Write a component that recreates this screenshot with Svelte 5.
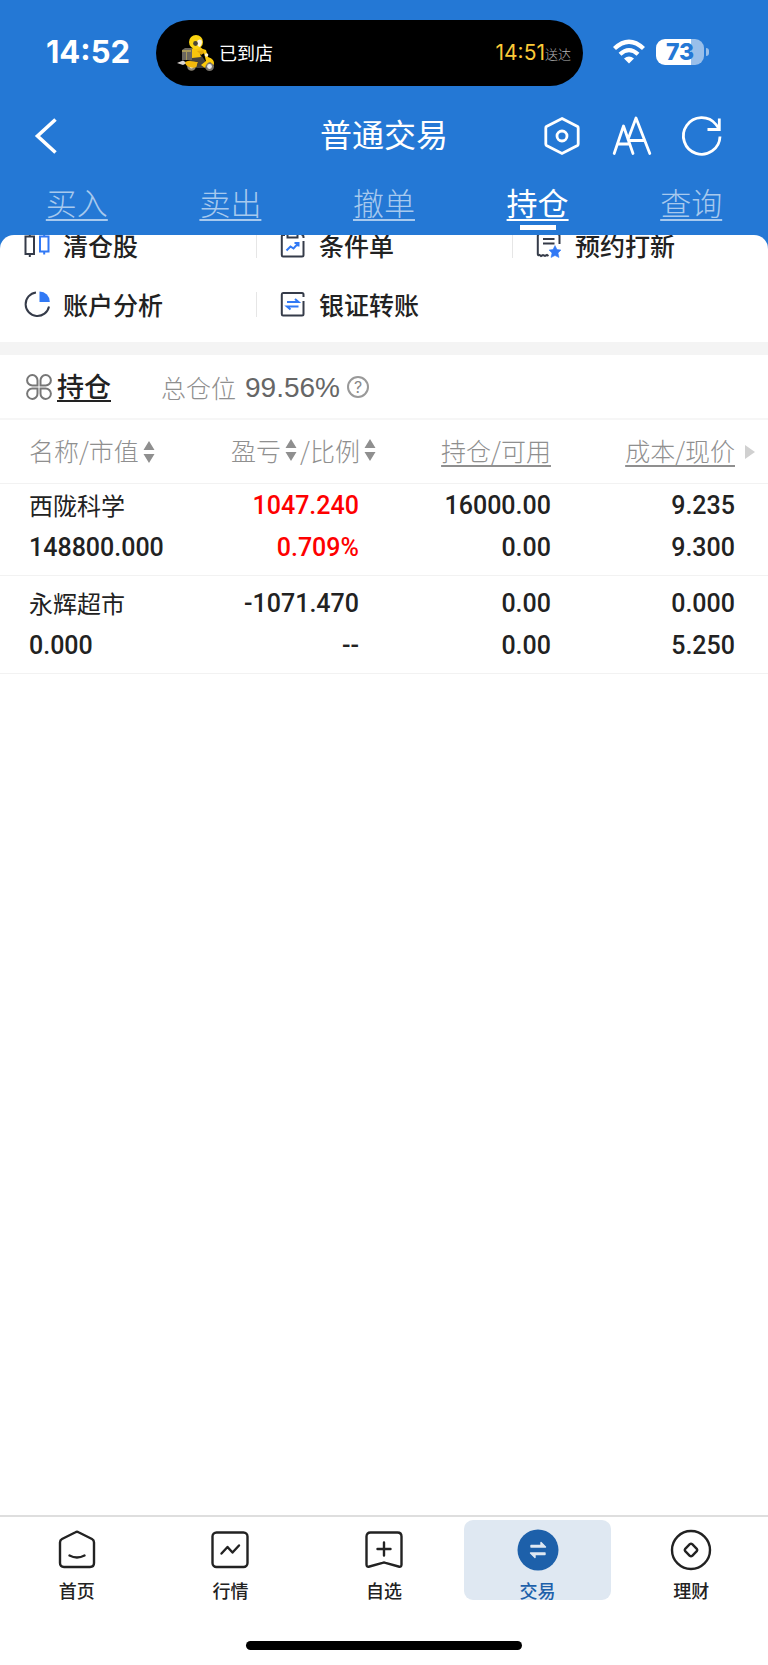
<script>
  let activeTab = "持仓";
  let activePage = "交易";

  const tabs = ["买入", "卖出", "撤单", "持仓", "查询"];

  const shortcuts = [
    { name: "清仓股", icon: "candles" },
    { name: "条件单", icon: "condition" },
    { name: "预约打新", icon: "booking" },
    { name: "账户分析", icon: "pie" },
    { name: "银证转账", icon: "transfer" }
  ];

  const holdings = [
    {
      name: "西陇科学",
      value: "148800.000",
      profit: "1047.240",
      ratio: "0.709%",
      amount: "16000.00",
      usable: "0.00",
      cost: "9.235",
      price: "9.300",
      up: true
    },
    {
      name: "永辉超市",
      value: "0.000",
      profit: "-1071.470",
      ratio: "--",
      amount: "0.00",
      usable: "0.00",
      cost: "0.000",
      price: "5.250",
      up: false
    }
  ];

  const pages = ["首页", "行情", "自选", "交易", "理财"];
</script>

{#snippet sorter()}
  <svg class="sorter" viewBox="0 0 12 24" aria-hidden="true">
    <path d="M6 1 L11.500 10 H0.500 Z M6 23 L0.500 14 H11.500 Z" fill="#8f8f8f" />
  </svg>
{/snippet}

<div class="app">
  <header>
    <div class="status">
      <span class="clock">14:52</span>
      <div class="island">
        <svg class="scooter" viewBox="0 0 38 36" aria-hidden="true">
          <path d="M0 28 L6 25.500 L10 28 L6 30 Z" fill="#d9d4d0" />
          <circle cx="14.500" cy="31.500" r="4.300" fill="#8a8474" />
          <circle cx="14.500" cy="31.500" r="2" fill="#f0ecd8" />
          <circle cx="32.500" cy="31.500" r="4.500" fill="#77736c" />
          <circle cx="32.500" cy="31.500" r="2.400" fill="#e9e9ec" />
          <path d="M8 27 Q13 24 21 27 L20 32 Q13 34 9 30 Z" fill="#f3b90c" />
          <path d="M14 22 L24 20 L29 27 L27 33 H19 L21 27 L13 26 Z" fill="#45413c" />
          <path d="M5 15 L8 13 H15 V25 H5 Z" fill="#6b675f" />
          <path d="M5 15 H14 V17 H5 Z M9 17 H10 V25 H9 Z" fill="#a99a5b" />
          <path d="M15 14 L17 11 H22 L27 15 V18 L23 19 L24 22 L15 23 Z" fill="#f8c50d" />
          <path d="M20 16 L28 15 L29 17 L24 20 Z" fill="#e4a80a" />
          <path d="M26 14 L29 15 L31 22 Q38 24 37 30 L33 27 Q29 28 28 33 L24 30 L29 26 Z" fill="#fbc90a" />
          <circle cx="29.500" cy="20" r="1.800" fill="#fff3cf" />
          <circle cx="19" cy="7" r="7" fill="#fbd410" />
          <path d="M20 6 Q22 3.500 24.500 5 Q26 9 22.500 12 Q20 11 20 9 Z" fill="#fff5db" />
          <circle cx="18.500" cy="8.500" r="2.400" fill="#4a4538" />
        </svg>
        <span class="arrived">已到店</span>
        <span class="eta">14:51</span>
        <span class="eta-note">送达</span>
      </div>
      <div class="signals">
        <svg class="wifi" viewBox="0 0 32 24" aria-hidden="true">
          <path d="M1.500 8.500 Q16 -5 30.500 8.500" fill="none" stroke="#fff" stroke-width="4.400" />
          <path d="M7 14.200 Q16 6 25 14.200" fill="none" stroke="#fff" stroke-width="4.200" />
          <path d="M11 18.500 Q16 14.500 21 18.500 L16 23.500 Z" fill="#fff" />
        </svg>
        <div class="battery"><span>73</span></div>
        <i class="nub"></i>
      </div>
    </div>

    <div class="titlebar">
      <button class="back" aria-label="返回">
        <svg viewBox="0 0 22 36" aria-hidden="true">
          <path d="M20.500 1.500 L2.500 18 L20.500 34.500" fill="none" stroke="#fff" stroke-width="3.600" />
        </svg>
      </button>
      <h1>普通交易</h1>
      <div class="tools">
        <button aria-label="设置">
          <svg viewBox="0 0 40 40" fill="none" stroke="#fff" stroke-width="2.800" aria-hidden="true">
            <path d="M20 2.500 L35.500 10.500 Q36.200 11 36.200 12 V28 Q36.200 29 35.500 29.500 L20 37.500 L4.500 29.500 Q3.800 29 3.800 28 V12 Q3.800 11 4.500 10.500 Z" />
            <circle cx="20" cy="20" r="5" />
          </svg>
        </button>
        <button aria-label="字体大小">
          <svg viewBox="0 0 40 40" fill="none" stroke="#fff" stroke-width="2.800" stroke-linecap="round" stroke-linejoin="round" aria-hidden="true">
            <path d="M2.200 37.500 L11.500 10 L21 37.500 M6 28 H17.500 M16 23.500 L24 2 L37.800 37.500 M17 24.500 H32.500" />
          </svg>
        </button>
        <button aria-label="刷新">
          <svg viewBox="0 0 40 40" fill="none" stroke="#fff" stroke-width="2.800" aria-hidden="true">
            <path d="M38 20.500 A18.300 18.300 0 1 1 34 8.500 L36.500 12" />
            <path d="M37.300 2.500 V13.500 H25.500" />
          </svg>
        </button>
      </div>
    </div>

    <nav class="tabs">
      {#each tabs as tab}
        <a
          href="#{tab}"
          class:active={tab === activeTab}
          on:click|preventDefault={() => (activeTab = tab)}
        >{tab}</a>
      {/each}
    </nav>
  </header>

  <main>
    <section class="shortcuts">
      <div class="shortcut-grid">
        {#each shortcuts as item, i}
          <button class="shortcut" class:first={i % 3 === 0}>
            <svg viewBox="0 0 26 26" fill="none" stroke="#353b49" stroke-width="2" aria-hidden="true">
              {#if item.icon === "candles"}
                <path d="M1.500 4.500 H10 V22 H1.500 Z M5.800 1 V4.500 M5.800 22 V25" />
                <path d="M16 4.500 H24.500 V19.500 H16 Z M20.200 1 V4.500 M20.200 19.500 V22.500" stroke="#3179f5" />
              {:else if item.icon === "condition"}
                <path d="M5 3 H3 Q1.800 3 1.800 4.500 V23 Q1.800 24.500 3 24.500 H22 Q23.500 24.500 23.500 23 V9 M23.500 6 V5 Q23.500 3 21.500 3" />
                <path d="M7.500 1.500 V5.500 H17.500 V1.500 H14.500 Q12.500 -1 10.500 1.500 Z" />
                <path d="M6.500 18.500 L10.500 14.500 L13.500 16.500 L18.500 11 M14.500 11 H18.500 V14.500" stroke="#3179f5" />
              {:else if item.icon === "booking"}
                <path d="M23.500 12 V4 Q23.500 2 21.500 2 H3.500 Q1.800 2 1.800 4 V22 Q1.800 24 3.500 23 L5 24 L7 23 L9 24 L11 23 L12.500 24 M7 7 H18.500 M7 11.500 H18.500" />
                <path d="M19 13.500 L21 17.500 L25 18 L22 21 L23 25.500 L19 23.500 L15 25.500 L16 21 L13 18 L17 17.500 Z" fill="#3179f5" stroke="#3179f5" stroke-width="0.500" />
              {:else if item.icon === "pie"}
                <path d="M12 1.500 A11.800 11.800 0 1 0 25 15.500" />
                <path d="M15.500 0.500 A10.300 10.300 0 0 1 25.800 11 H15.500 Z" fill="#3179f5" stroke="none" />
              {:else}
                <path d="M23.500 6 V3.500 Q23.500 2 22 2 H3 Q1.800 2 1.800 3.500 V23 Q1.800 24.500 3 24.500 H22 Q23.500 24.500 23.500 23 V10" />
                <path d="M7 11 H18.500 L15 8 M18.500 15.500 H7 L10.500 18.500" stroke="#3179f5" />
              {/if}
            </svg>
            {item.name}
          </button>
        {/each}
      </div>
    </section>

    <section class="summary">
      <svg class="clover" viewBox="0 0 26 26" fill="none" stroke="#777" stroke-width="2" aria-hidden="true">
        <path d="M11.500 11.500 H6.500 A5.200 5.200 0 1 1 11.500 6.500 Z M14.500 11.500 V6.500 A5.200 5.200 0 1 1 19.500 11.500 Z M11.500 14.500 V19.500 A5.200 5.200 0 1 1 6.500 14.500 Z M14.500 14.500 H19.500 A5.200 5.200 0 1 1 14.500 19.500 Z" />
      </svg>
      <h2>持仓</h2>
      <span class="total">总仓位</span>
      <span class="percent">99.56%</span>
      <button class="help" aria-label="仓位说明">?</button>
    </section>

    <table>
      <thead>
        <tr>
          <th>名称/市值{@render sorter()}</th>
          <th><div class="hang">盈亏{@render sorter()}<span class="slash">/</span>比例{@render sorter()}</div></th>
          <th><u>持仓/可用</u></th>
          <th class="last">
            <u>成本/现价</u>
            <svg class="more" viewBox="0 0 10 14" aria-hidden="true"><path d="M0 0 L10 7 L0 14 Z" fill="#d0d0d0" /></svg>
          </th>
        </tr>
      </thead>
      <tbody>
        {#each holdings as row}
          <tr>
            <td><div class="stock">{row.name}</div><div>{row.value}</div></td>
            <td class:up={row.up}><div>{row.profit}</div><div>{row.ratio}</div></td>
            <td><div>{row.amount}</div><div>{row.usable}</div></td>
            <td><div>{row.cost}</div><div>{row.price}</div></td>
          </tr>
        {/each}
      </tbody>
    </table>
  </main>

  <footer>
    <nav class="pages">
      {#each pages as page, i}
        <a
          href="#{page}"
          class:active={page === activePage}
          on:click|preventDefault={() => (activePage = page)}
        >
          <svg viewBox="0 0 42 42" fill="none" stroke="#222" stroke-width="2.400" stroke-linecap="round" stroke-linejoin="round" aria-hidden="true">
            {#if i === 0}
              <path d="M19.500 3.200 Q21 2.400 22.500 3.200 L36 10 Q38 11 38 13.500 V34 Q38 38 34 38 H8 Q4 38 4 34 V13.500 Q4 11 6 10 Z" />
              <path d="M13.500 26.500 Q21 30.500 28.500 26.500" />
            {:else if i === 1}
              <rect x="3.500" y="3.500" width="35" height="34.500" rx="4" />
              <path d="M12.500 24.500 L18.500 18 L23.500 23.500 L30 16.500" />
            {:else if i === 2}
              <path d="M7.500 3.500 H34.500 Q38.500 3.500 38.500 7.500 V35.500 Q38.500 38.500 35.500 37.500 L22.500 33.800 Q21 33.300 19.500 33.800 L6.500 37.500 Q3.500 38.500 3.500 35.500 V7.500 Q3.500 3.500 7.500 3.500 Z" />
              <path d="M21 13.500 V26.500 M14.500 20 H27.500" />
            {:else if i === 3}
              <circle cx="21" cy="21" r="20.500" fill="#1d60aa" stroke="none" />
              <path d="M14 16.500 H24 V13.500 L28.500 18 H14 Z M28 25.500 H18 V28.500 L13.500 24 H28 Z" fill="#dfe8f2" stroke="#dfe8f2" stroke-width="1.400" />
            {:else}
              <circle cx="21" cy="21" r="19" />
              <path d="M19.800 15.200 Q21 14.200 22.200 15.200 L26.800 19.800 Q27.800 21 26.800 22.200 L22.200 26.800 Q21 27.800 19.800 26.800 L15.200 22.200 Q14.200 21 15.200 19.800 Z" />
            {/if}
          </svg>
          {page}
        </a>
      {/each}
    </nav>
    <div class="home-bar"></div>
  </footer>
</div>

<style>
  :global(body) {
    background: #fff;
  }

  .app {
    min-height: 100vh;
    display: flex;
    flex-direction: column;
    background: #2478d5;
    color: #222;
    font-family: "Noto Sans CJK SC", sans-serif;
  }
  button {
    padding: 0;
    border: none;
    background: none;
    color: inherit;
    font-family: inherit;
    cursor: pointer;
  }
  a {
    color: inherit;
    text-decoration: none;
  }
  svg {
    display: block;
    flex: none;
    overflow: visible;
  }

  /* Status bar */
  .status {
    display: grid;
    grid-template-columns: 156px 1fr 185px;
    align-items: center;
    padding-top: 20px;
    color: #fff;
  }
  .clock {
    padding: 0 0 2px 46px;
    font: 700 31px/36px Inter, sans-serif;
  }
  .island {
    display: flex;
    align-items: center;
    height: 66px;
    padding: 0 12px 0 21px;
    border-radius: 33px;
    background: #000;
  }
  .scooter {
    width: 38px;
    height: 36px;
    margin-right: 4px;
  }
  .arrived {
    padding-bottom: 2px;
    font-size: 18px;
    font-weight: 400;
  }
  .eta {
    margin-left: auto;
    color: #fbca38;
    font: 400 21px/24px Inter, sans-serif;
  }
  .eta-note {
    color: #b5b5b5;
    font-size: 13px;
    font-weight: 300;
  }
  .signals {
    display: flex;
    align-items: center;
    padding: 0 0 2px 30px;
  }
  .wifi {
    width: 32px;
    height: 24px;
    margin-right: 11px;
  }
  .battery {
    width: 48px;
    height: 26px;
    border-radius: 9px;
    background: linear-gradient(90deg, #fff 73%, #99bfea 73%);
    color: #2478d5;
    font: 800 23px/26px Inter, sans-serif;
    text-align: center;
  }
  .nub {
    width: 3px;
    height: 8px;
    margin-left: 2px;
    border-radius: 0 4px 4px 0;
    background: #99bfea;
  }

  /* Title bar */
  .titlebar {
    display: grid;
    grid-template-columns: 1fr auto 1fr;
    align-items: center;
    height: 99px;
    padding: 0 46px 0 35px;
    color: #fff;
  }
  h1 {
    margin: 0 0 0 11px;
    padding-bottom: 6px;
    font-size: 32px;
    font-weight: 400;
    line-height: 46px;
  }
  .back svg {
    width: 22px;
    height: 36px;
  }
  .tools {
    display: flex;
    justify-content: flex-end;
    gap: 30px;
  }
  .tools svg {
    width: 40px;
    height: 40px;
  }

  /* Tabs */
  .tabs {
    display: grid;
    grid-template-columns: repeat(5, 1fr);
    height: 50px;
    justify-items: center;
  }
  .tabs a {
    position: relative;
    color: #a7c9ee;
    font-size: 31px;
    font-weight: 300;
    line-height: 34px;
    text-decoration: underline;
    text-decoration-thickness: 2px;
    text-underline-offset: 4px;
  }
  .tabs .active {
    color: #fff;
    font-weight: 400;
  }
  .tabs .active::after {
    content: "";
    position: absolute;
    left: 50%;
    bottom: 5px;
    width: 36px;
    height: 5px;
    margin-left: -18px;
    background: #fff;
  }

  main {
    flex: 1;
    overflow: hidden;
    border-radius: 14px 14px 0 0;
    background: #fff;
  }

  /* Shortcuts */
  .shortcuts {
    overflow: hidden;
    padding-bottom: 7px;
    border-bottom: 13px solid #f4f4f4;
  }
  .shortcut-grid {
    display: grid;
    grid-template-columns: repeat(3, 1fr);
    grid-auto-rows: 59px;
    margin-top: -18px;
  }
  .shortcut {
    display: flex;
    align-items: center;
    gap: 13px;
    padding-bottom: 3px;
    font-size: 25px;
    font-weight: 500;
    line-height: 24px;
  }
  .shortcut::before {
    content: "";
    width: 1px;
    height: 25px;
    margin-right: 11px;
    background: #e6e6e6;
  }
  .shortcut.first::before {
    background: none;
  }
  .shortcut svg {
    width: 26px;
    height: 26px;
    margin-left: -1px;
  }

  /* Summary */
  .summary {
    display: flex;
    align-items: center;
    height: 63px;
    padding-left: 26px;
    border-bottom: 2px solid #f6f6f6;
  }
  .clover {
    width: 26px;
    height: 26px;
    margin-right: 5px;
  }
  h2 {
    margin: 0 50px 0 0;
    padding-bottom: 2px;
    font-size: 27px;
    font-weight: 500;
    line-height: 36px;
    text-decoration: underline;
    text-decoration-thickness: 2px;
    text-underline-offset: 3px;
  }
  .total {
    margin-right: 9px;
    color: #8f8f8f;
    font-size: 25px;
    font-weight: 300;
  }
  .percent {
    padding-top: 2px;
    color: #666;
    font: 400 28px/32px "Liberation Sans", sans-serif;
  }
  .help {
    width: 22px;
    height: 22px;
    margin-left: 7px;
    border: 2px solid #999;
    border-radius: 50%;
    color: #888;
    font: 400 16px/18px Inter, sans-serif;
  }

  /* Holdings */
  table {
    width: 100%;
    table-layout: fixed;
    border-collapse: separate;
    border-spacing: 0;
  }
  th,
  td {
    box-sizing: border-box;
    padding: 0 2px 0 0;
    border-bottom: 1px solid #f2f2f2;
    text-align: right;
  }
  th {
    height: 64px;
    width: 25%;
    padding-bottom: 3px;
    color: #8f8f8f;
    font-size: 25px;
    font-weight: 300;
    white-space: nowrap;
  }
  th:first-child {
    width: 27%;
  }
  th:nth-child(2) {
    width: 20%;
  }
  th:last-child {
    width: 28%;
  }
  th:first-child,
  td:first-child {
    padding-left: 29px;
    text-align: left;
  }
  th:last-child,
  td:last-child {
    padding-right: 33px;
  }
  th u {
    text-decoration-thickness: 2px;
    text-underline-offset: 4px;
  }
  .hang {
    display: flex;
    align-items: center;
    justify-content: flex-end;
    margin-right: -17px;
  }
  .sorter {
    display: inline-block;
    width: 12px;
    height: 24px;
    margin-left: 4px;
    vertical-align: -3px;
  }
  .slash {
    margin-left: 3px;
  }
  .last {
    position: relative;
  }
  .more {
    position: absolute;
    top: 25px;
    right: 13px;
    width: 10px;
    height: 14px;
  }
  td {
    padding-top: 7px;
    padding-bottom: 6px;
    font-family: Roboto, sans-serif;
    font-size: 25px;
    font-weight: 500;
    line-height: 42px;
  }
  tbody tr:first-child td {
    padding-top: 1px;
  }
  td div {
    height: 42px;
  }
  .stock {
    font-family: "Noto Sans CJK SC", sans-serif;
    font-size: 24px;
    font-weight: 400;
    line-height: 40px;
  }
  .up {
    color: #fe0000;
  }

  /* Bottom navigation */
  footer {
    border-top: 2px solid #dedede;
    background: #fff;
  }
  .pages {
    display: grid;
    grid-template-columns: repeat(5, 1fr);
    padding-top: 3px;
  }
  .pages a {
    display: flex;
    flex-direction: column;
    align-items: center;
    gap: 10px;
    height: 71px;
    margin: 0 3px;
    padding-top: 9px;
    border-radius: 9px;
    font-size: 18px;
    font-weight: 500;
    line-height: 18px;
  }
  .pages svg {
    width: 42px;
    height: 42px;
  }
  .pages .active {
    background: #dfe8f2;
    color: #1d60aa;
  }
  .home-bar {
    width: 36%;
    height: 9px;
    margin: 41px auto 15px;
    border-radius: 5px;
    background: #000;
  }
</style>
